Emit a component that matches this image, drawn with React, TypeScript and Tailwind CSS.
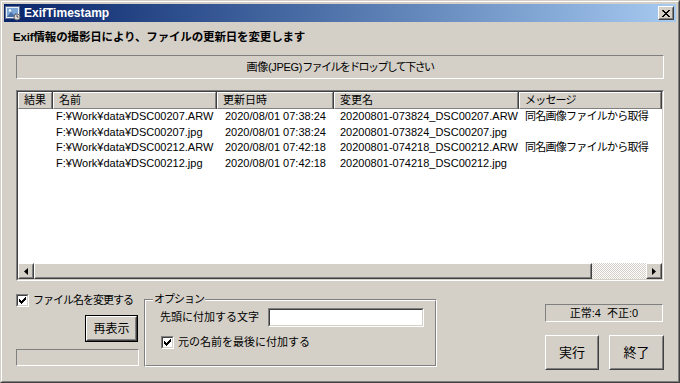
import React from "react";

const FONT = "font-['Liberation_Sans','Noto_Sans_CJK_JP',sans-serif]";

function Raised({ className = "", children, def = false }: { className?: string; children?: React.ReactNode; def?: boolean }) {
  const inner = (
    <div className="h-full w-full border border-t-white border-l-white border-r-[#404040] border-b-[#404040] bg-[#d4d0c8]">
      <div className="flex h-full w-full items-center justify-center border border-t-[#d4d0c8] border-l-[#d4d0c8] border-r-[#808080] border-b-[#808080]">
        {children}
      </div>
    </div>
  );
  if (def) return <div className={`border border-black ${className}`}>{inner}</div>;
  return <div className={className}>{inner}</div>;
}

function Check() {
  return (
    <svg width="7" height="7" viewBox="0 0 7 7">
      <path d="M0 2h1v1h1v1h1v-1h1v-1h1v-1h1v-1h1v3h-1v1h-1v1h-1v1h-1v1h-1v-1h-1v-1h-1v-1h-1z" fill="#000" />
    </svg>
  );
}

function CheckBox() {
  return (
    <div className="h-[13px] w-[13px] shrink-0 border border-t-[#808080] border-l-[#808080] border-r-white border-b-white">
      <div className="flex h-full w-full items-center justify-center border border-t-[#404040] border-l-[#404040] border-r-[#d4d0c8] border-b-[#d4d0c8] bg-white">
        <Check />
      </div>
    </div>
  );
}

const rows = [
  ["F:¥Work¥data¥DSC00207.ARW", "2020/08/01 07:38:24", "20200801-073824_DSC00207.ARW", "同名画像ファイルから取得"],
  ["F:¥Work¥data¥DSC00207.jpg", "2020/08/01 07:38:24", "20200801-073824_DSC00207.jpg", ""],
  ["F:¥Work¥data¥DSC00212.ARW", "2020/08/01 07:42:18", "20200801-074218_DSC00212.ARW", "同名画像ファイルから取得"],
  ["F:¥Work¥data¥DSC00212.jpg", "2020/08/01 07:42:18", "20200801-074218_DSC00212.jpg", ""],
];

function HeaderCell({ w, children }: { w: string; children: React.ReactNode }) {
  return (
    <div className={`${w} h-full border-r border-r-[#404040]`}>
      <div className="flex h-full items-center border border-t-white border-l-white border-r-[#808080] border-b-[#808080] pl-[5px] whitespace-nowrap">
        {children}
      </div>
    </div>
  );
}

export default function App() {
  return (
    <div className={`${FONT} h-[383px] w-[680px] border border-t-[#d4d0c8] border-l-[#d4d0c8] border-r-[#404040] border-b-[#404040] bg-[#d4d0c8] text-[11px] text-black`}>
      <div className="flex h-full w-full flex-col border border-t-white border-l-white border-r-[#808080] border-b-[#808080] p-[2px]">
        {/* title bar */}
        <div className="flex h-[18px] shrink-0 items-center bg-gradient-to-r from-[#0a246a] to-[#a6caf0] pl-[1px] pr-[2px]">
          <svg width="16" height="16" viewBox="0 0 16 16" className="shrink-0">
            <rect x="0.5" y="1.5" width="14" height="12" fill="#e8eef6" stroke="#5a6f95" />
            <rect x="2" y="3" width="11" height="9" fill="#7da7d9" />
            <path d="M2 12 L6 7 L9 10 L11 8 L13 12 Z" fill="#4a6fa5" />
            <circle cx="5" cy="5.5" r="1.2" fill="#fff" />
            <circle cx="12" cy="12" r="3" fill="#d8d8d8" stroke="#6b6b6b" />
            <path d="M12 10.2 V12 H13.4" stroke="#333" strokeWidth="0.8" fill="none" />
          </svg>
          <span className="ml-[3px] font-['Liberation_Sans',sans-serif] text-[12px] font-bold leading-[16px] text-white">ExifTimestamp</span>
          <div className="flex-1" />
          <Raised className="h-[14px] w-[16px]">
            <svg width="8" height="7" viewBox="0 0 8 7">
              <path d="M0 0h2v1h1v1h2v-1h1v-1h2v1h-1v1h-1v1h-1v1h1v1h1v1h1v1h-2v-1h-1v-1h-2v1h-1v1h-2v-1h1v-1h1v-1h1v-1h-1v-1h-1z" fill="#000" />
            </svg>
          </Raised>
        </div>

        {/* body */}
        <div className="flex flex-1 flex-col pt-px">
          <div className="mt-[6px] h-[16px] pl-[9px] text-[11.5px] font-bold leading-[16px] tracking-[-0.15px] whitespace-nowrap">
            Exif情報の撮影日により、ファイルの更新日を変更します
          </div>

          <div className="mx-[12px] mt-[10px] flex h-[24px] items-center justify-center whitespace-nowrap border border-t-[#808080] border-l-[#808080] border-r-white border-b-white">
            <span className="tracking-[-0.3px]">画像(JPEG)</span>
            <span className="tracking-[-1.6px]">ファイルをドロップして下さい</span>
          </div>

          {/* list view */}
          <div className="mx-[12px] mt-[11px] h-[191px] border border-t-[#808080] border-l-[#808080] border-r-white border-b-white">
            <div className="flex h-full flex-col border border-t-[#404040] border-l-[#404040] border-r-[#d4d0c8] border-b-[#d4d0c8] bg-white">
              <div className="flex h-[17px] shrink-0 bg-[#d4d0c8]">
                <HeaderCell w="w-[35px]">結果</HeaderCell>
                <HeaderCell w="w-[164px]">名前</HeaderCell>
                <HeaderCell w="w-[117px]">更新日時</HeaderCell>
                <HeaderCell w="w-[185px]">変更名</HeaderCell>
                <HeaderCell w="flex-1"><span className="tracking-[-0.8px]">メッセージ</span></HeaderCell>
              </div>
              <div className="flex-1">
                {rows.map((r, i) => (
                  <div key={i} className="flex h-[15.6px] items-center whitespace-nowrap leading-[15px]">
                    <div className="w-[35px]" />
                    <div className="w-[164px] pl-[3px]">{r[0]}</div>
                    <div className="w-[117px] pl-[8px]">{r[1]}</div>
                    <div className="w-[185px] pl-[6px]">{r[2]}</div>
                    <div className="flex-1 pl-[6px] tracking-[-0.75px]">{r[3]}</div>
                  </div>
                ))}
              </div>
              {/* horizontal scrollbar */}
              <div className="flex h-[16px] shrink-0">
                <Raised className="h-[16px] w-[16px]">
                  <svg width="4" height="7" viewBox="0 0 4 7">
                    <path d="M4 0 L0 3.5 L4 7 Z" fill="#000" />
                  </svg>
                </Raised>
                <Raised className="h-[16px] w-[558px]" />
                <div className="h-[16px] flex-1 bg-[repeating-conic-gradient(#d4d0c8_0_25%,#ffffff_0_50%)] bg-[length:2px_2px]" />
                <Raised className="h-[16px] w-[16px]">
                  <svg width="4" height="7" viewBox="0 0 4 7">
                    <path d="M0 0 L4 3.5 L0 7 Z" fill="#000" />
                  </svg>
                </Raised>
              </div>
            </div>
          </div>

          {/* bottom area */}
          <div className="flex flex-1 pl-[12px]">
            {/* column 1 */}
            <div className="flex w-[123px] flex-col">
              <div className="mt-[13px] flex h-[13px] items-center whitespace-nowrap">
                <CheckBox />
                <span className="ml-[4px] leading-[13px] tracking-[-1px]">ファイル名を変更する</span>
              </div>
              <Raised def className="ml-[69px] mt-[8px] h-[27px] w-[53px]">
                <span className="text-[12px]">再表示</span>
              </Raised>
              <div className="mt-[7px] h-[17px] w-[123px] border border-t-[#808080] border-l-[#808080] border-r-white border-b-white" />
            </div>

            {/* group box */}
            <div className="relative ml-[5px] mt-[18px] h-[68px] w-[293px] border border-t-[#808080] border-l-[#808080] border-r-white border-b-white">
              <div className="h-full w-full border border-t-white border-l-white border-r-[#808080] border-b-[#808080] pl-[14px] pt-[7px]">
                <div className="flex h-[19px] items-center">
                  <span className="w-[108px] whitespace-nowrap">先頭に付加する文字</span>
                  <div className="h-[19px] w-[156px] border border-t-[#808080] border-l-[#808080] border-r-white border-b-white">
                    <div className="h-full w-full border border-t-[#404040] border-l-[#404040] border-r-[#d4d0c8] border-b-[#d4d0c8] bg-white" />
                  </div>
                </div>
                <div className="ml-[1px] mt-[9px] flex h-[13px] items-center whitespace-nowrap">
                  <CheckBox />
                  <span className="ml-[4px] leading-[13px]">元の名前を最後に付加する</span>
                </div>
              </div>
              <span className="absolute left-[8px] top-[-8px] bg-[#d4d0c8] px-px leading-[14px] tracking-[-1px]">オプション</span>
            </div>

            {/* column 3 */}
            <div className="ml-[108px] flex flex-col">
              <div className="mt-[23px] flex h-[18px] w-[118px] items-center justify-center whitespace-nowrap border border-t-[#808080] border-l-[#808080] border-r-white border-b-white">
                正常:4&nbsp;&nbsp;不正:0
              </div>
              <div className="mt-[13px] flex gap-[10px]">
                <Raised className="h-[35px] w-[54px]">
                  <span className="text-[13px]">実行</span>
                </Raised>
                <Raised className="h-[35px] w-[55px]">
                  <span className="text-[13px]">終了</span>
                </Raised>
              </div>
            </div>
          </div>
        </div>
      </div>
    </div>
  );
}
